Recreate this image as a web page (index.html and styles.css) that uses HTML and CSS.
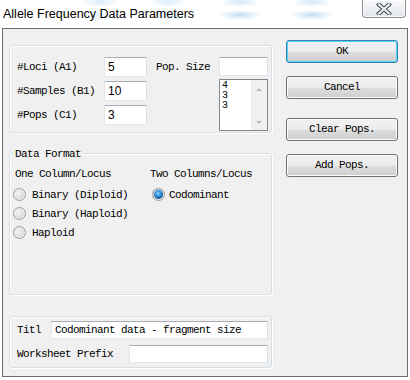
FILE: index.html
```html
<!DOCTYPE html>
<html>
<head>
<meta charset="utf-8">
<link rel="stylesheet" href="styles.css">
</head>
<body>
<div class="titlebar">
  <div class="title">Allele Frequency Data Parameters</div>
  <div class="close">
    <svg width="16" height="12" viewBox="0 0 16 12">
      <path d="M3 1.5 L13 10.5 M13 1.5 L3 10.5" stroke="#4a4f55" stroke-width="4.2" stroke-linecap="square"/>
      <path d="M3 1.5 L13 10.5 M13 1.5 L3 10.5" stroke="#e9ebee" stroke-width="2.2" stroke-linecap="square"/>
    </svg>
  </div>
</div>
<div class="window">
  <div class="leftcol">
    <div class="group topgroup">
      <span class="lbl c1 r1">#Loci (A1)</span>
      <div class="inp sans short c2 r1">5</div>
      <span class="lbl poplbl">Pop. Size</span>
      <div class="inp popinp"></div>

      <span class="lbl c1 r2">#Samples (B1)</span>
      <div class="inp sans short c2 r2">10</div>
      <div class="listbox">
        <div class="items">4<br>3<br>3</div>
        <div class="scroll">
          <span class="arrow up"></span>
          <span class="arrow down"></span>
        </div>
      </div>

      <span class="lbl c1 r3">#Pops (C1)</span>
      <div class="inp sans short c2 r3">3</div>
    </div>

    <div class="group datagroup">
      <span class="legend">Data Format</span>
      <div class="cols">
        <div class="col colone">
          <div class="hdr">One Column/Locus</div>
          <div class="radiorow"><span class="radio"></span><span>Binary (Diploid)</span></div>
          <div class="radiorow"><span class="radio"></span><span>Binary (Haploid)</span></div>
          <div class="radiorow"><span class="radio"></span><span>Haploid</span></div>
        </div>
        <div class="col coltwo">
          <div class="hdr">Two Columns/Locus</div>
          <div class="radiorow"><span class="radio on"></span><span>Codominant</span></div>
        </div>
      </div>
    </div>

    <div class="group bottomgroup">
      <div class="brow">
        <span class="lbl titl">Titl</span>
        <div class="inp titlinp">Codominant data - fragment size</div>
      </div>
      <div class="brow">
        <span class="lbl wsl">Worksheet Prefix</span>
        <div class="inp wsinp"></div>
      </div>
    </div>
  </div>

  <div class="buttons">
    <div class="btn default">OK</div>
    <div class="btn">Cancel</div>
    <div class="btn gapbig">Clear Pops.</div>
    <div class="btn">Add Pops.</div>
  </div>
</div>
</body>
</html>
```

FILE: styles.css
```css
html, body {
  margin: 0;
  padding: 0;
  width: 410px;
  height: 380px;
  overflow: hidden;
  background: #ffffff;
}

body {
  font-family: "Liberation Mono", monospace;
  font-size: 11px;
  letter-spacing: -0.6px;
  color: #000;
  background:
    radial-gradient(ellipse 18px 5px at 100px 2px, rgba(150,200,235,0.35), transparent),
    radial-gradient(ellipse 18px 5px at 168px 2px, rgba(150,200,235,0.35), transparent),
    radial-gradient(ellipse 20px 5px at 240px 2px, rgba(150,200,235,0.45), transparent),
    radial-gradient(ellipse 20px 5px at 312px 2px, rgba(150,200,235,0.45), transparent),
    radial-gradient(ellipse 22px 5px at 240px 15px, rgba(120,180,225,0.45), transparent),
    radial-gradient(ellipse 22px 5px at 312px 15px, rgba(120,180,225,0.45), transparent),
    radial-gradient(ellipse 18px 5px at 100px 16px, rgba(150,200,235,0.25), transparent),
    radial-gradient(ellipse 18px 5px at 168px 16px, rgba(150,200,235,0.25), transparent),
    #ffffff;
}

.titlebar {
  height: 28px;
  display: flex;
  align-items: flex-start;
  justify-content: space-between;
}

.title {
  font-family: "Liberation Sans", Arial, sans-serif;
  font-size: 12.5px;
  letter-spacing: 0;
  color: #000;
  margin-left: 3px;
  margin-top: 6px;
  line-height: 16px;
}

.close {
  width: 44px;
  height: 18px;
  margin-right: 4px;
  border: 1px solid #8c9097;
  border-top: none;
  border-radius: 0 0 4px 4px;
  background: linear-gradient(#f7f8fa, #e4e7eb);
  box-shadow: inset 0 0 0 1px rgba(255,255,255,0.8);
  display: flex;
  align-items: center;
  justify-content: center;
  box-sizing: border-box;
}

.window {
  margin-left: 2px;
  width: 406px;
  height: 349px;
  box-sizing: border-box;
  border: 1px solid #6e6e6e;
  background: #f0f0f0;
  display: flex;
  align-items: flex-start;
}

.leftcol {
  margin-left: 6px;
  margin-top: 16px;
  width: 263px;
  display: flex;
  flex-direction: column;
}

.group {
  box-sizing: border-box;
  border: 1px solid #d5dfe5;
  border-radius: 3px;
  box-shadow: 1px 1px 0 #ffffff, inset 1px 1px 0 #ffffff;
}

.lbl {
  white-space: pre;
  line-height: 12px;
}

.inp {
  box-sizing: border-box;
  background: #fff;
  border: 1px solid #abadb3;
  border-color: #abadb3 #dbdfe6 #e3e9ef #e2e3ea;
  height: 19px;
  line-height: 17px;
  padding-left: 3px;
  white-space: pre;
  overflow: hidden;
}

.inp.sans {
  font-family: "Liberation Sans", Arial, sans-serif;
  font-size: 12px;
  letter-spacing: 0;
}

/* top group */
.topgroup {
  height: 88px;
  padding: 11px 0 0 7px;
  display: grid;
  grid-template-columns: 87px 43px 72px 49px;
  grid-template-rows: 20px 20px 20px;
  row-gap: 4px;
  align-items: center;
}

.c1 { grid-column: 1; }
.c2 { grid-column: 2; }
.r1 { grid-row: 1; }
.r2 { grid-row: 2; }
.r3 { grid-row: 3; }

.short {
  width: 43px;
  height: 20px;
  line-height: 18px;
}

.poplbl {
  grid-column: 3;
  grid-row: 1;
  padding-left: 9px;
}

.popinp {
  grid-column: 4;
  grid-row: 1;
  width: 49px;
  align-self: start;
}

.listbox {
  grid-column: 4;
  grid-row: 2 / span 2;
  align-self: start;
  margin-top: -2px;
  width: 49px;
  height: 52px;
  box-sizing: border-box;
  border: 1px solid #828790;
  background: #fff;
  display: flex;
}

.items {
  flex: 1;
  padding: 1px 0 0 2px;
  line-height: 10px;
  font-size: 10px;
  letter-spacing: 0;
}

.scroll {
  width: 17px;
  background: #f0f0f0;
  border-left: 1px solid #fff;
  display: flex;
  flex-direction: column;
  justify-content: space-between;
  align-items: center;
  padding: 8px 0 6px;
  box-sizing: border-box;
}

.arrow {
  width: 0;
  height: 0;
  border-left: 3px solid transparent;
  border-right: 3px solid transparent;
}

.arrow.up {
  border-bottom: 3px solid #b9b9b9;
}

.arrow.down {
  border-top: 3px solid #b9b9b9;
}

/* data format group */
.datagroup {
  margin-top: 20px;
  height: 142px;
  display: flex;
  flex-direction: column;
  align-items: flex-start;
}

.legend {
  margin-top: -6px;
  margin-left: 4px;
  padding: 0 1px;
  background: #f0f0f0;
  line-height: 12px;
  white-space: pre;
}

.cols {
  display: flex;
  margin-top: 8px;
  padding-left: 5px;
}

.col {
  display: flex;
  flex-direction: column;
}

.colone {
  width: 135px;
}

.hdr {
  line-height: 12px;
  white-space: pre;
  margin-bottom: 5px;
}

.radiorow {
  height: 19px;
  display: flex;
  align-items: center;
  white-space: pre;
}

.colone .radiorow .radio {
  margin-left: -2px;
  margin-right: 6px;
}

.coltwo .radiorow .radio {
  margin-left: 2px;
  margin-right: 4px;
}

.radio {
  width: 13px;
  height: 13px;
  box-sizing: border-box;
  border-radius: 50%;
  border: 1px solid #9a9a9a;
  background: radial-gradient(circle at 40% 40%, #f4f4f4 0%, #dadada 60%, #c8c8c8 100%);
  box-shadow: inset 0 0 0 1px #f2f2f2;
  flex: none;
}

.radio.on {
  background:
    radial-gradient(circle at 45% 40%, #8fd6ff 0%, #2b8ad2 35%, #154d86 62%, transparent 65%),
    radial-gradient(circle, #f4f4f4 0%, #d8d8d8 100%);
}

/* bottom group */
.bottomgroup {
  margin-top: 21px;
  height: 52px;
  padding: 4px 0 0 7px;
  display: flex;
  flex-direction: column;
  gap: 6px;
}

.brow {
  display: flex;
  align-items: center;
  height: 18px;
}

.brow .inp {
  height: 18px;
  line-height: 16px;
}

.titl {
  width: 34px;
}

.titlinp {
  width: 217px;
}

.wsl {
  width: 112px;
}

.wsinp {
  width: 139px;
}

/* buttons */
.buttons {
  margin-left: 14px;
  margin-top: 11px;
  width: 112px;
  display: flex;
  flex-direction: column;
  gap: 13px;
}

.btn {
  box-sizing: border-box;
  height: 23px;
  border: 1px solid #707070;
  border-radius: 3px;
  background: linear-gradient(#f2f2f2 0%, #ebebeb 50%, #dddddd 51%, #cfcfcf 100%);
  box-shadow: inset 0 0 0 1px #fcfcfc;
  text-align: center;
  line-height: 21px;
  white-space: pre;
}

.btn.default {
  border-color: #3c7fb1;
  box-shadow: inset 0 0 0 1px #48d8fb;
}

.btn.gapbig {
  margin-top: 6px;
}
```
